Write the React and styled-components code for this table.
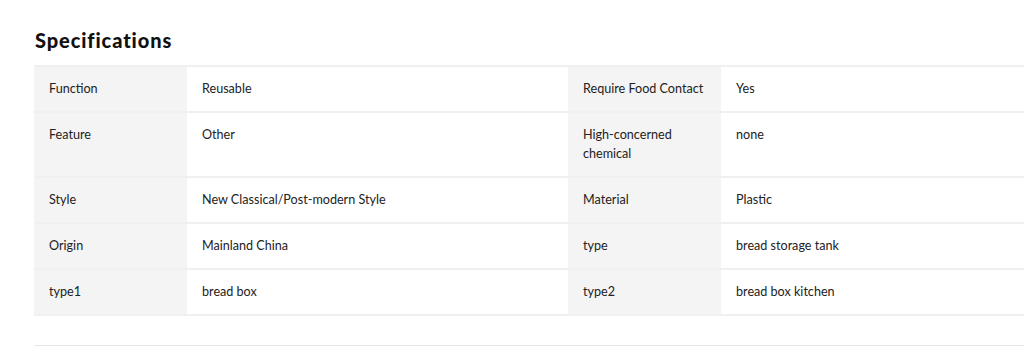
import React from "react";
import styled, { createGlobalStyle } from "styled-components";

const GlobalStyle = createGlobalStyle`
  html, body {
    margin: 0;
    padding: 0;
    background: #fff;
    overflow-x: hidden;
  }
  body {
    font-family: Lato, "Noto Sans", sans-serif;
    color: #222;
  }
`;

const Section = styled.section`
  padding: 28px 0 0 34px;
`;

const Title = styled.h2`
  margin: 0 0 13px 1px;
  font-size: 20px;
  line-height: 24px;
  font-weight: 900;
  color: #111;
  letter-spacing: 0.9px;
`;

const Table = styled.div`
  display: grid;
  grid-template-columns: 153px 381px 153px 1fr;
  border-bottom: 2px solid #f0f0f0;
`;

const Cell = styled.div`
  padding: 12px 14px 13px 15px;
  border-top: 2px solid #f0f0f0;
  font-size: 12.6px;
  line-height: 19px;
  color: #222;
  background: ${(p) => (p.$label ? "#f4f4f4" : "#fff")};
`;

const Divider = styled.hr`
  margin: 29px 0 0;
  border: 0;
  border-top: 1px solid #e6e6e6;
`;

const specs = [
  ["Function", "Reusable", "Require Food Contact", "Yes"],
  ["Feature", "Other", "High-concerned chemical", "none"],
  ["Style", "New Classical/Post-modern Style", "Material", "Plastic"],
  ["Origin", "Mainland China", "type", "bread storage tank"],
  ["type1", "bread box", "type2", "bread box kitchen"],
];

export default function App() {
  return (
    <>
      <GlobalStyle />
      <Section>
        <Title>Specifications</Title>
        <Table>
          {specs.map((row, i) => (
            <React.Fragment key={i}>
              <Cell $label>{row[0]}</Cell>
              <Cell>{row[1]}</Cell>
              <Cell $label>{row[2]}</Cell>
              <Cell>{row[3]}</Cell>
            </React.Fragment>
          ))}
        </Table>
        <Divider />
      </Section>
    </>
  );
}
